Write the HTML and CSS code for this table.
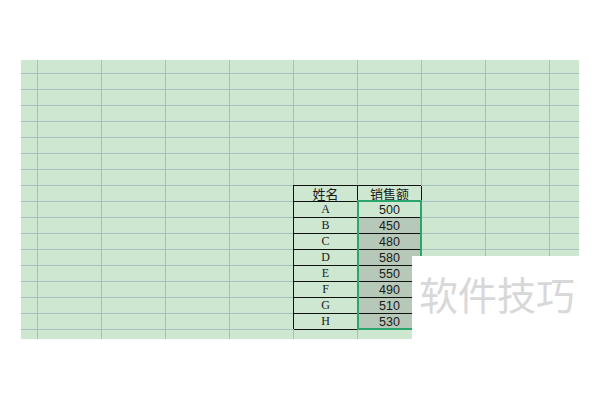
FILE: index.html
```html
<!DOCTYPE html>
<html lang="zh">
<head>
<meta charset="utf-8">
<link rel="stylesheet" href="styles.css">
</head>
<body>
<div class="sheet">
  <div class="data">
    <div class="cell head">姓名</div><div class="cell head">销售额</div>
    <div class="cell name">A</div><div class="cell num active">500</div>
    <div class="cell name">B</div><div class="cell num sel">450</div>
    <div class="cell name">C</div><div class="cell num sel">480</div>
    <div class="cell name">D</div><div class="cell num sel">580</div>
    <div class="cell name">E</div><div class="cell num sel">550</div>
    <div class="cell name">F</div><div class="cell num sel">490</div>
    <div class="cell name">G</div><div class="cell num sel">510</div>
    <div class="cell name">H</div><div class="cell num sel">530</div>
    <div class="selection"></div>
  </div>
  <div class="watermark">软件技巧</div>
</div>
</body>
</html>
```
FILE: styles.css
```css
html, body {
  margin: 0;
  padding: 0;
  background: #ffffff;
}
body {
  width: 600px;
  height: 400px;
  overflow: hidden;
}
.sheet {
  position: relative;
  margin: 60px 0 0 21px;
  width: 558px;
  height: 279px;
  display: grid;
  grid-template-columns: 16px repeat(8, 64px) 30px;
  grid-template-rows: 13px repeat(16, 16px) 10px;
  background-color: #cde7d0;
  background-image:
    linear-gradient(to right, #a6bfc0 1px, transparent 1px),
    linear-gradient(to bottom, #a6bfc0 1px, transparent 1px);
  background-size: 64px 100%, 100% 16px;
  background-position: 16px 0, 0 13px;
}
.data {
  position: relative;
  grid-column: 6 / 8;
  grid-row: 9 / 18;
  display: grid;
  grid-template-columns: 64px 64px;
  grid-auto-rows: 16px;
  box-shadow: 1px 1px 0 #111;
}
.cell {
  box-sizing: border-box;
  border-left: 1px solid #111;
  border-top: 1px solid #111;
  display: flex;
  align-items: center;
  justify-content: center;
  color: #1a1a1a;
  background: #cde7d0;
}
.head {
  font-family: "Noto Sans CJK SC", sans-serif;
  font-size: 13px;
  line-height: 1;
}
.name {
  font-family: "Liberation Serif", serif;
  font-size: 12px;
}
.num {
  font-family: "Liberation Sans", sans-serif;
  font-size: 12.5px;
}
.sel {
  background: #b6c8b7;
}
.selection {
  position: absolute;
  left: 64px;
  top: 15px;
  width: 65px;
  height: 130px;
  box-sizing: border-box;
  border: 2px solid #2ba56d;
}
.watermark {
  position: absolute;
  left: 391px;
  top: 196px;
  width: 190px;
  height: 100px;
  box-sizing: border-box;
  padding: 18px 0 0 7px;
  background: #ffffff;
  font-family: "Noto Sans CJK SC", sans-serif;
  font-size: 39px;
  line-height: 1;
  color: #d8d8d8;
}
```
